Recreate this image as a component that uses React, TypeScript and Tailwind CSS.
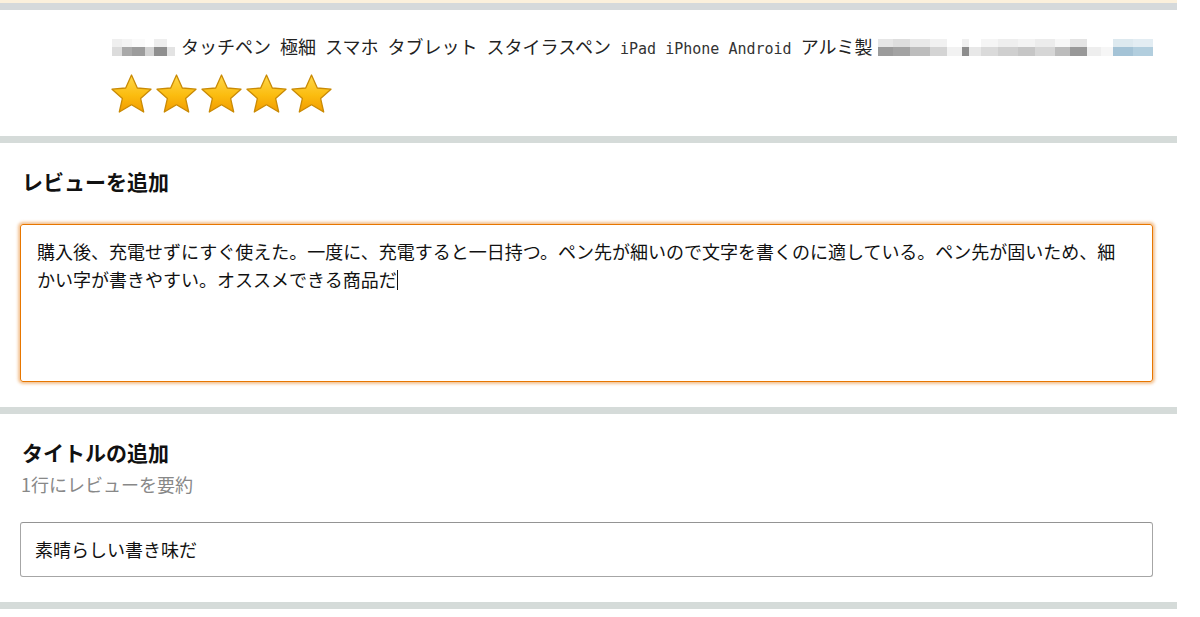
import { useState } from 'react';

const FONT = { fontFamily: '"Noto Sans CJK JP", "Noto Sans", sans-serif' };
const MONO = { fontFamily: '"DejaVu Sans Mono", "Liberation Mono", monospace' };

// pixelated (blurred) blocks that hide part of the product name
const leftBlur: [number, string, string][] = [
  [10, '#efefef', '#dcdcdc'],
  [10, '#f4f4f4', '#a9a9a9'],
  [13, '#fafafa', '#9c9c9c'],
  [9, '#ffffff', '#d2d2d2'],
  [13, '#eeeeee', '#8f8f8f'],
  [8, '#ffffff', '#e3e3e3'],
];

const rightBlur: [number, string, string][] = [
  [15, '#e6e6e6', '#9b9b9b'],
  [17, '#dedede', '#a3a3a3'],
  [20, '#e9e9e9', '#bdbdbd'],
  [17, '#f1f1f1', '#d4d4d4'],
  [15, '#ffffff', '#f2f2f2'],
  [7, '#f0f0f0', '#8d8d8d'],
  [12, '#ffffff', '#e8e8e8'],
  [17, '#f5f5f5', '#dadada'],
  [20, '#eeeeee', '#cfcfcf'],
  [17, '#f3f3f3', '#c6c6c6'],
  [20, '#ececec', '#d6d6d6'],
  [15, '#f7f7f7', '#bcbcbc'],
  [17, '#e4e4e4', '#989898'],
  [14, '#ffffff', '#eeeeee'],
  [12, '#ffffff', '#f6f6f6'],
  [20, '#dde9ef', '#a4c3d6'],
  [20, '#e3edf3', '#b2cede'],
];

// product name, split so latin + spaces get half-width monospace
const nameParts: [string, boolean][] = [
  ['タッチペン', false],
  [' ', true],
  ['極細', false],
  [' ', true],
  ['スマホ', false],
  [' ', true],
  ['タブレット', false],
  [' ', true],
  ['スタイラスペン', false],
  [' iPad iPhone Android ', true],
  ['アルミ製', false],
];

function Blur({ cells }: { cells: [number, string, string][] }) {
  return (
    <span className="inline-flex flex-col align-middle">
      <span className="flex h-[8px]">
        {cells.map(([w, c], i) => (
          <span key={i} style={{ width: w, background: c }} />
        ))}
      </span>
      <span className="flex h-[9px]">
        {cells.map(([w, , c], i) => (
          <span key={i} style={{ width: w, background: c }} />
        ))}
      </span>
    </span>
  );
}

function Star({ id }: { id: number }) {
  return (
    <svg width="43" height="42" viewBox="0 0 43 42">
      <defs>
        <linearGradient id={`g${id}`} x1="0" y1="0" x2="0" y2="1">
          <stop offset="0" stopColor="#ffd84a" />
          <stop offset="0.55" stopColor="#fbbc0f" />
          <stop offset="1" stopColor="#f39c00" />
        </linearGradient>
      </defs>
      <path
        d="M21.5 2 L27.3 15 L41 16.2 L30.6 25.4 L33.7 39 L21.5 31.8 L9.3 39 L12.4 25.4 L2 16.2 L15.7 15 Z"
        fill={`url(#g${id})`}
        stroke="#c98a05"
        strokeWidth="1.3"
        strokeLinejoin="round"
      />
    </svg>
  );
}

function Separator() {
  return <div className="h-[7px] bg-[#d5dbd9]" />;
}

export default function App() {
  const [title] = useState('素晴らしい書き味だ');

  return (
    <div className="min-h-[617px] bg-white text-[#111]" style={FONT}>
      <div className="w-[1177px]">
        <div className="h-[3px] bg-[#fbf0dc]" />
        <div className="h-[7px] bg-[#d5d9db]" />

        {/* product */}
        <div className="pl-[112px] pt-[25px] pb-[21px]">
          <div className="flex items-center h-[24px] text-[18px] leading-[24px] whitespace-pre text-[#222]">
            <Blur cells={leftBlur} />
            <span className="ml-[6px]">
              {nameParts.map(([t, mono], i) =>
                mono ? (
                  <span key={i} className="text-[15px] text-[#333]" style={MONO}>
                    {t}
                  </span>
                ) : (
                  <span key={i}>{t}</span>
                )
              )}
            </span>
            <span className="ml-[6px] flex">
              <Blur cells={rightBlur} />
            </span>
          </div>
          <div className="mt-[14px] flex gap-[2px] -ml-[2px]">
            {[0, 1, 2, 3, 4].map(i => (
              <Star key={i} id={i} />
            ))}
          </div>
        </div>

        <Separator />

        {/* review */}
        <div className="pl-[20px] pr-[24px] pt-[24px] pb-[25px]">
          <h2 className="pl-[2px] text-[21px] leading-[28px] font-bold">レビューを追加</h2>
          <div className="mt-[29px] h-[158px] rounded-[3px] border border-[#e77600] shadow-[0_0_3px_2px_rgba(228,121,17,0.45)] pl-[16px] pr-[20px] pt-[12px] text-[18px] leading-[28px]">
            購入後、充電せずにすぐ使えた。一度に、充電すると一日持つ。ペン先が細いので文字を書くのに適している。ペン先が固いため、細かい字が書きやすい。オススメできる商品だ
            <span className="inline-block w-[1px] h-[20px] bg-[#111] align-[-3px]" />
          </div>
        </div>

        <Separator />

        {/* title */}
        <div className="pl-[20px] pr-[24px] pt-[24px] pb-[25px]">
          <h2 className="pl-[2px] text-[21px] leading-[28px] font-bold">タイトルの追加</h2>
          <p className="mt-[5px] pl-[1px] text-[18px] leading-[26px] text-[#888]">1行にレビューを要約</p>
          <div className="mt-[25px] h-[55px] flex items-center rounded-[3px] border border-[#a6a6a6] border-t-[#949494] pl-[14px] text-[18px]">
            {title}
          </div>
        </div>

        <Separator />
      </div>
    </div>
  );
}
